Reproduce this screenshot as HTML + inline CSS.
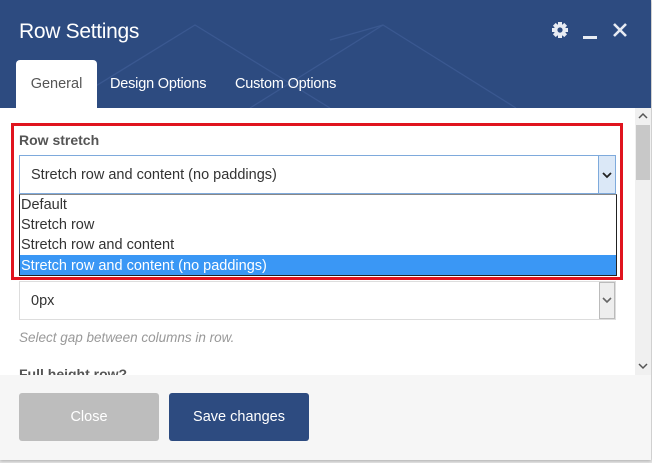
<!DOCTYPE html>
<html><head><meta charset="utf-8"><style>
*{margin:0;padding:0;box-sizing:border-box}
body{width:652px;height:463px;overflow:hidden;background:#e6e6e6;font-family:"Liberation Sans",sans-serif;position:relative}
.modal{position:absolute;left:0;top:0;width:651px;height:460px;background:#fff;box-shadow:0 1px 3px rgba(0,0,0,.25)}
.hdr{position:absolute;left:0;top:0;width:651px;height:108px;background:#2d4b80;overflow:hidden}
.title{position:absolute;left:19px;top:20px;color:#fff;font-size:21px;letter-spacing:-0.3px}
.tab{position:absolute;top:76px;color:#fff;font-size:14.5px;letter-spacing:-0.2px}
.gen{position:absolute;left:16px;top:60px;width:81px;height:48px;background:#fff;border-radius:4px 4px 0 0;color:#555;font-size:14.5px;text-align:center;padding-top:16px}
.abs{position:absolute}
.lbl{font-size:14px;font-weight:bold;color:#555}
.sel{position:absolute;left:19px;width:597px;height:39px;background:#fff;font-size:14.5px;color:#333;padding:11px 0 0 11px}
.opt{position:absolute;left:21px;width:594px;height:20px;font-size:14.5px;color:#333;line-height:20px;padding-left:0}
.btn{position:absolute;top:393px;width:140px;height:48px;border-radius:3px;color:#fff;font-size:14.5px;text-align:center;line-height:48px}
</style></head><body>
<div class="modal">
<div class="hdr">
<svg class="abs" style="left:0;top:0" width="651" height="108"><g fill="none" stroke="#3a5890" stroke-width="1.3"><path d="M60 108 L195 25 L330 108"/><path d="M250 108 L383 25 L516 108"/><path d="M330 40 L383 25"/></g></svg>
<div class="title">Row Settings</div>
<svg class="abs" style="left:551px;top:21px" width="18" height="18" viewBox="0 0 18 18"><g fill="#e8ecf3"><circle cx="9" cy="9" r="6"/><rect x="7" y="1" width="4" height="16"/><rect x="1" y="7" width="16" height="4"/><rect x="7" y="1" width="4" height="16" transform="rotate(45 9 9)"/><rect x="7" y="1" width="4" height="16" transform="rotate(-45 9 9)"/></g><circle cx="9" cy="9" r="2.6" fill="#2d4b80"/></svg>
<div class="abs" style="left:583px;top:36px;width:14px;height:3px;background:#e8ecf3"></div>
<svg class="abs" style="left:612px;top:22px" width="16" height="16"><path d="M2 2L14 14M14 2L2 14" stroke="#e8ecf3" stroke-width="2.6"/></svg>
<div class="gen">General</div>
<div class="tab" style="left:110px">Design Options</div>
<div class="tab" style="left:235px">Custom Options</div>
</div>
<div class="abs" style="left:635px;top:108px;width:16px;height:267px;background:#f0f0f0"></div>
<div class="abs" style="left:636px;top:125px;width:14px;height:55px;background:#c8c8c8"></div>
<svg class="abs" style="left:638px;top:112px" width="10" height="8"><path d="M1 6L5 2L9 6" stroke="#555" stroke-width="1.5" fill="none"/></svg>
<svg class="abs" style="left:638px;top:362px" width="10" height="8"><path d="M1 2L5 6L9 2" stroke="#555" stroke-width="1.5" fill="none"/></svg>
<div class="abs" style="left:11px;top:123px;width:612px;height:157px;border:3px solid #e0141e"></div>
<div class="abs lbl" style="left:19px;top:132px">Row stretch</div>
<div class="sel" style="top:155px;border:1px solid #7eaadc">Stretch row and content (no paddings)</div>
<div class="abs" style="left:598px;top:156px;width:17px;height:37px;background:#dbe8f7;border-left:1px solid #7eaadc"></div>
<svg class="abs" style="left:602px;top:171px" width="10" height="8"><path d="M1 2L5 6L9 2" stroke="#222" stroke-width="1.8" fill="none"/></svg>
<div class="abs" style="left:19px;top:194px;width:598px;height:82px;border:1px solid #222;border-top:1px solid #888;background:#fff"></div>
<div class="opt" style="top:195px">Default</div>
<div class="opt" style="top:215px">Stretch row</div>
<div class="opt" style="top:235px">Stretch row and content</div>
<div class="abs" style="left:20px;top:255px;width:596px;height:20px;background:#3a97f5"></div>
<div class="opt" style="top:256px;color:#fff">Stretch row and content (no paddings)</div>
<div class="sel" style="top:281px;height:39px;border:1px solid #ddd">0px</div>
<div class="abs" style="left:599px;top:282px;width:16px;height:37px;background:#eee;border:1px solid #bbb"></div>
<svg class="abs" style="left:602px;top:296px" width="10" height="8"><path d="M1 2L5 6L9 2" stroke="#666" stroke-width="1.6" fill="none"/></svg>
<div class="abs" style="left:19px;top:330px;font-size:13.5px;font-style:italic;color:#999">Select gap between columns in row.</div>
<div class="abs lbl" style="left:19px;top:366px">Full height row?</div>
<div class="abs" style="left:0;top:375px;width:651px;height:85px;background:#f6f6f6"></div>
<div class="btn" style="left:19px;background:#bdbdbd">Close</div>
<div class="btn" style="left:169px;background:#2d4b80">Save changes</div>
</div>
</body></html>
